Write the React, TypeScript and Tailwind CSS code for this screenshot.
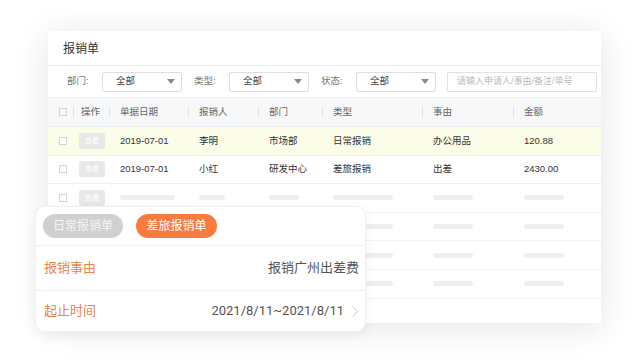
import { FC } from "react";

const cols = [25, 36, 79, 70, 64, 100, 91, 88];

const heads = ["", "操作", "单据日期", "报销人", "部门", "类型", "事由", "金额"];

const rows = [
  { date: "2019-07-01", person: "李明", dept: "市场部", type: "日常报销", reason: "办公用品", amount: "120.88", hl: true },
  { date: "2019-07-01", person: "小红", dept: "研发中心", type: "差旅报销", reason: "出差", amount: "2430.00", hl: false },
];

// skeleton bar widths per column (col2..col7)
const bars = [55, 26, 30, 60, 40, 40];

const Checkbox: FC = () => (
  <span className="ml-[11px] block w-[8px] h-[8px] border border-[#d4d4d4] bg-white" />
);

const ViewBtn: FC<{ label?: boolean }> = ({ label = true }) => (
  <span className="ml-[6px] flex items-center justify-center w-[26px] h-[16px] rounded-[2px] bg-[#e8e8e8] text-white text-[7px]">
    {label ? "查看" : null}
  </span>
);

const Select: FC<{ label: string }> = ({ label }) => (
  <>
    <span className="w-[35px] text-[#777]">{label}</span>
    <div className="w-[80px] h-[20px] border border-[#dedede] rounded-[2px] flex items-center justify-between pl-[13px] pr-[6px] text-[#444]">
      <span>全部</span>
      <svg width="8" height="5" viewBox="0 0 8 5">
        <path d="M0 0h8L4 5z" fill="#8a8a8a" />
      </svg>
    </div>
  </>
);

const App: FC = () => {
  return (
    <div
      className="relative w-[640px] h-[360px] overflow-hidden bg-white"
      style={{ fontFamily: '"Liberation Sans", "Noto Sans CJK SC", sans-serif' }}
    >
      <div className="pt-[31px] pl-[48px]">
        {/* Main card */}
        <div className="w-[553px] h-[292px] bg-white shadow-[0_4px_30px_rgba(40,50,80,0.13)] text-[9.5px]">
          <div className="h-[35px] flex items-center pl-[15px] pt-[1px] text-[12px] text-[#333] border-b border-[#ededed]">
            报销单
          </div>

          {/* Filters */}
          <div className="h-[32px] flex items-center pl-[19px] border-b border-[#ededed]">
            <Select label="部门:" />
            <span className="w-[12px]" />
            <Select label="类型:" />
            <span className="w-[12px]" />
            <Select label="状态:" />
            <div className="ml-[11px] w-[150px] h-[20px] border border-[#e2e2e2] rounded-[2px] flex items-center pl-[9px] text-[#bbb] text-[9px]">
              请输入申请人/事由/备注/单号
            </div>
          </div>

          {/* Table header */}
          <div className="h-[29px] flex items-center bg-[#f7f8fa] text-[#666] border-b border-[#eeeeee]">
            {heads.map((h, i) => (
              <div key={i} className="flex items-center" style={{ width: cols[i] }}>
                {i === 0 ? (
                  <Checkbox />
                ) : (
                  <>
                    <span className="w-px h-[10px] bg-[#e2e2e2]" />
                    <span className={i === 1 ? "ml-[7px]" : "ml-[10px]"}>{h}</span>
                  </>
                )}
              </div>
            ))}
          </div>

          {/* Data rows */}
          {rows.map((r, ri) => (
            <div
              key={ri}
              className={`h-[28.6px] flex items-center text-[#333] border-b border-[#f0f0f0] ${r.hl ? "bg-[#fbfde9]" : "bg-white"}`}
            >
              <div style={{ width: cols[0] }}>
                <Checkbox />
              </div>
              <div style={{ width: cols[1] }}>
                <ViewBtn />
              </div>
              {[r.date, r.person, r.dept, r.type, r.reason, r.amount].map((v, i) => (
                <div key={i} className="pl-[11px]" style={{ width: cols[i + 2] }}>
                  {v}
                </div>
              ))}
            </div>
          ))}

          {/* Skeleton rows */}
          {[0, 1, 2, 3].map((k) => (
            <div key={k} className="h-[28.6px] flex items-center border-b border-[#f2f2f2]">
              <div style={{ width: cols[0] }}>
                <Checkbox />
              </div>
              <div style={{ width: cols[1] }}>
                <ViewBtn label={k === 0} />
              </div>
              {bars.map((w, i) => (
                <div key={i} className="pl-[11px]" style={{ width: cols[i + 2] }}>
                  <div className="h-[5px] rounded-full bg-[#efefef]" style={{ width: w }} />
                </div>
              ))}
            </div>
          ))}
        </div>
      </div>

      {/* Mobile form overlay */}
      <div
        className="absolute left-[35px] top-[206px] w-[331px] h-[126px] bg-white rounded-[10px] border border-[#f1f1f1] shadow-[0_3px_12px_rgba(0,0,0,0.06)] flex flex-col"
        style={{ fontFamily: 'Roboto, "Noto Sans CJK SC", sans-serif' }}
      >
        <div className="h-[39px] flex items-center gap-[13px] pl-[7px] border-b border-[#eeeeee]">
          <span className="w-[80px] h-[24px] rounded-full bg-[#d0d0d0] text-[#f4f4f4] text-[12px] flex items-center justify-center">
            日常报销单
          </span>
          <span className="w-[81px] h-[24px] rounded-full bg-[#f97b40] text-white text-[12px] flex items-center justify-center">
            差旅报销单
          </span>
        </div>
        <div className="h-[45px] flex items-center justify-between pl-[8px] pr-[6px] border-b border-[#eeeeee] text-[13px]">
          <span className="text-[#e8844c]">报销事由</span>
          <span className="text-[#555]">报销广州出差费</span>
        </div>
        <div className="flex-1 flex items-center justify-between pl-[8px] pr-[7px] text-[13px]">
          <span className="text-[#e8844c]">起止时间</span>
          <span className="flex items-center text-[#555]">
            2021/8/11~2021/8/11
            <svg className="ml-[8px]" width="6" height="11" viewBox="0 0 6 11">
              <path d="M0.5 0.5L5.5 5.5L0.5 10.5" fill="none" stroke="#c8c8c8" strokeWidth="1" />
            </svg>
          </span>
        </div>
      </div>
    </div>
  );
};

export default App;
